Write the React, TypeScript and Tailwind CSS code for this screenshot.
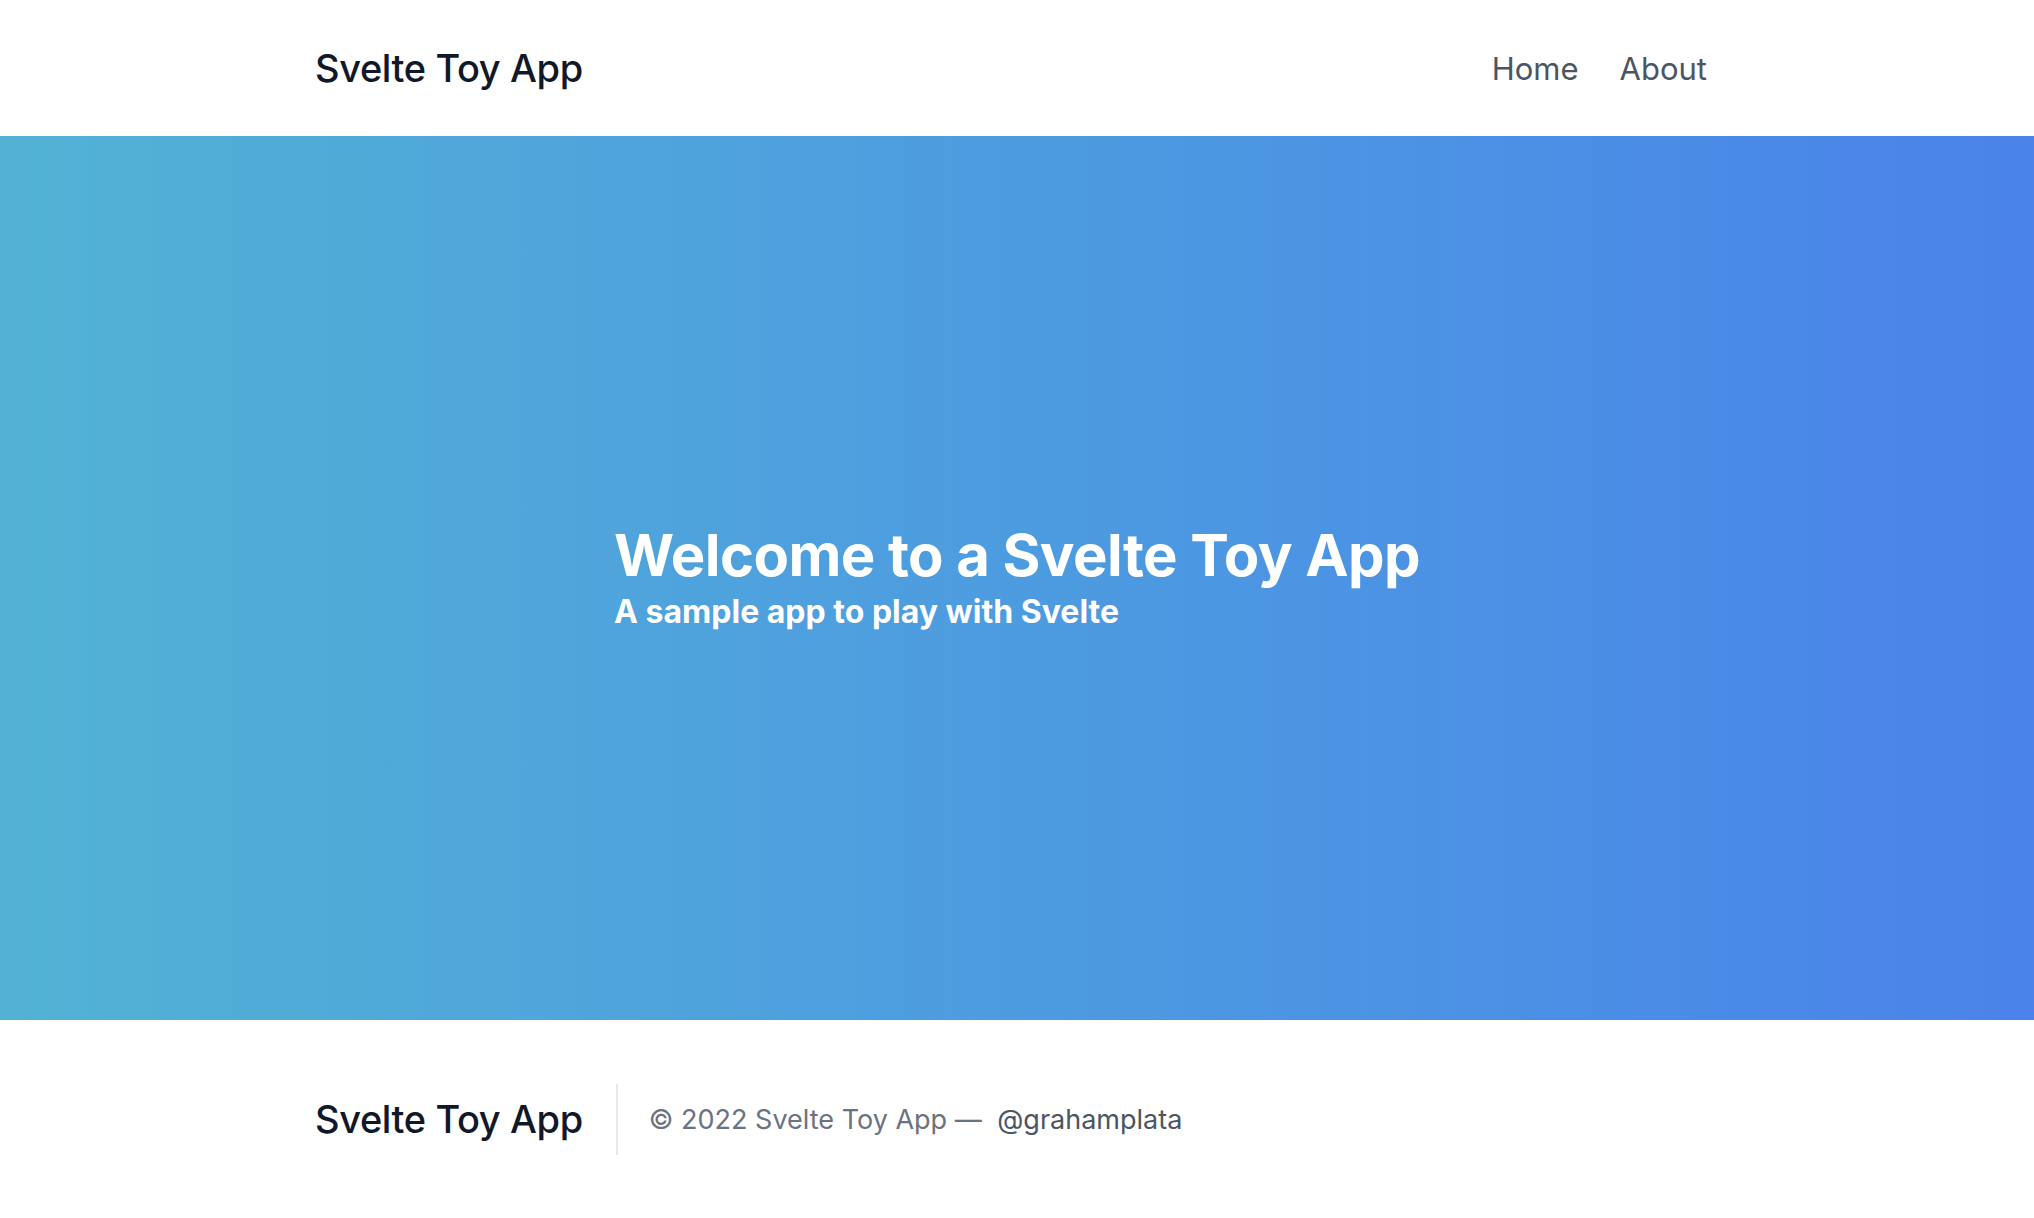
import React from "react";

export default function App() {
  return (
    <div className="min-h-screen w-full bg-white" style={{ fontFamily: "Inter, 'Noto Sans', 'Liberation Sans', sans-serif" }}>
      <header className="flex h-[136px] items-center justify-between pl-[315px] pr-[327px]">
        <div className="text-[38px] font-medium leading-none tracking-[-0.01em] text-[#111827]">Svelte Toy App</div>
        <nav className="flex items-center gap-[41px] text-[31px] leading-none text-[#4b5563]">
          <a href="#" className="hover:text-[#111827]">Home</a>
          <a href="#" className="hover:text-[#111827]">About</a>
        </nav>
      </header>
      <section className="flex h-[884px] items-center justify-center bg-gradient-to-r from-[#52b2d4] to-[#4a83ea]">
        <div className="text-left text-white">
          <h1 className="text-[58px] font-bold leading-[1.1] tracking-[-0.01em]">Welcome to a Svelte Toy App</h1>
          <p className="mt-[4px] text-[32px] font-bold leading-tight">A sample app to play with Svelte</p>
        </div>
      </section>
      <footer className="flex h-[198px] items-center pl-[315px]">
        <div className="text-[38px] font-medium leading-none tracking-[-0.01em] text-[#111827]">Svelte Toy App</div>
        <div className="ml-[33px] mr-[31px] h-[71px] w-[2px] bg-[#e5e7eb]" />
        <p className="text-[27px] leading-none text-[#6b7280]">
          © 2022 Svelte Toy App —{" "}
          <a href="#" className="ml-[8px] text-[#4b5563]">@grahamplata</a>
        </p>
      </footer>
    </div>
  );
}
